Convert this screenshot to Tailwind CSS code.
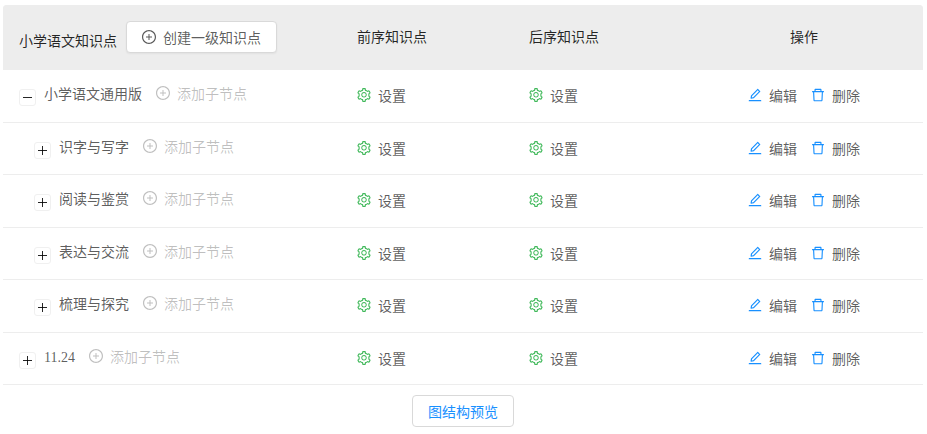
<!DOCTYPE html>
<html lang="zh-CN">
<head>
    <meta charset="UTF-8">
    <meta name="viewport" content="width=device-width, initial-scale=1.0">
    <title>小学语文知识点</title>
    <script src="https://cdn.jsdelivr.net/npm/@tailwindcss/browser@4"></script>
</head>
<body class="bg-white pt-[5px] pl-[3px] pr-1 text-sm leading-[22px] text-black/65 font-['Noto_Sans_CJK_SC',sans-serif]">

    <!-- Icon definitions -->
    <svg class="hidden" aria-hidden="true">
        <symbol id="icon-plus" viewBox="64 64 896 896">
            <path d="M696 480H544V328c0-4.400-3.600-8-8-8h-48c-4.400 0-8 3.600-8 8v152H328c-4.400 0-8 3.600-8 8v48c0 4.400 3.600 8 8 8h152v152c0 4.400 3.600 8 8 8h48c4.400 0 8-3.600 8-8V544h152c4.400 0 8-3.600 8-8v-48c0-4.400-3.600-8-8-8z"/>
            <path d="M512 64C264.600 64 64 264.600 64 512s200.600 448 448 448 448-200.600 448-448S759.400 64 512 64zm0 820c-205.400 0-372-166.600-372-372s166.600-372 372-372 372 166.600 372 372-166.600 372-372 372z"/>
        </symbol>
        <symbol id="icon-edit" viewBox="64 64 896 896">
            <path d="M257.700 752c2 0 4-.2 6-.5L431.900 722c2-.4 3.900-1.300 5.300-2.800l423.900-423.900a9.960 9.960 0 0 0 0-14.100L694.900 114.900c-1.900-1.900-4.400-2.900-7.100-2.900s-5.200 1-7.100 2.900L256.800 538.800c-1.500 1.500-2.400 3.300-2.800 5.300l-29.500 168.200a33.500 33.500 0 0 0 9.400 29.800c6.600 6.400 14.900 9.900 23.800 9.900zm67.400-174.400L687.800 215l73.300 73.300-362.700 362.600-88.900 15.700 15.600-89zM880 836H144c-17.700 0-32 14.300-32 32v36c0 4.400 3.600 8 8 8h784c4.400 0 8-3.600 8-8v-36c0-17.700-14.300-32-32-32z"/>
        </symbol>
        <symbol id="icon-delete" viewBox="64 64 896 896">
            <path d="M360 184h-8c4.400 0 8-3.600 8-8v8h304v-8c0 4.400 3.600 8 8 8h-8v72h72v-80c0-35.300-28.700-64-64-64H352c-35.300 0-64 28.700-64 64v80h72v-72zm504 72H160c-17.700 0-32 14.300-32 32v32c0 4.400 3.600 8 8 8h60.400l24.700 523c1.600 34.100 29.800 61 63.900 61h454c34.200 0 62.300-26.800 63.900-61l24.700-523H888c4.400 0 8-3.600 8-8v-32c0-17.700-14.300-32-32-32zM731.300 840H292.700l-24.200-512h487l-24.200 512z"/>
        </symbol>
        <symbol id="icon-setting" viewBox="64 64 896 896">
            <path d="M924.800 625.700l-65.500-56c3.100-19 4.700-38.400 4.700-57.800s-1.600-38.800-4.700-57.800l65.500-56a32.030 32.030 0 0 0 9.300-35.200l-.9-2.600a443.740 443.740 0 0 0-79.700-137.900l-1.800-2.100a32.120 32.120 0 0 0-35.100-9.500l-81.300 28.900c-30-24.600-63.500-44-99.700-57.600l-15.700-85a32.050 32.050 0 0 0-25.800-25.700l-2.700-.5c-52.100-9.400-106.900-9.400-159 0l-2.700.5a32.050 32.050 0 0 0-25.800 25.700l-15.800 85.400a351.860 351.860 0 0 0-99 57.400l-81.900-29.100a32 32 0 0 0-35.100 9.500l-1.800 2.100a446.020 446.020 0 0 0-79.700 137.900l-.9 2.600c-4.500 12.500-.8 26.500 9.300 35.200l66.300 56.600c-3.100 18.800-4.600 38-4.600 57.100 0 19.200 1.500 38.400 4.600 57.100L99 625.500a32.030 32.030 0 0 0-9.300 35.200l.9 2.600c18.100 50.400 44.900 96.900 79.700 137.900l1.800 2.100a32.120 32.120 0 0 0 35.100 9.500l81.900-29.100c29.800 24.500 63.100 43.900 99 57.400l15.800 85.400a32.050 32.050 0 0 0 25.800 25.700l2.700.5a449.400 449.400 0 0 0 159 0l2.700-.5a32.050 32.050 0 0 0 25.800-25.700l15.700-85a350 350 0 0 0 99.700-57.600l81.300 28.900a32 32 0 0 0 35.100-9.500l1.800-2.100c34.800-41.100 61.600-87.500 79.700-137.900l.9-2.600c4.500-12.300.8-26.300-9.300-35zM788.300 465.900c2.500 15.100 3.800 30.600 3.800 46.100s-1.300 31-3.800 46.100l-6.600 40.100 74.700 63.900a370.030 370.030 0 0 1-42.600 73.600L721 702.800l-31.400 25.800c-23.900 19.600-50.500 35-79.300 45.800l-38.100 14.300-17.900 97a377.500 377.500 0 0 1-85 0l-17.900-97.200-37.800-14.500c-28.500-10.800-55-26.200-78.700-45.700l-31.400-25.900-93.400 33.200c-17-22.900-31.200-47.600-42.600-73.600l75.500-64.500-6.500-40c-2.400-14.900-3.700-30.300-3.700-45.500 0-15.300 1.200-30.600 3.700-45.500l6.500-40-75.500-64.500c11.300-26.100 25.600-50.700 42.600-73.600l93.400 33.200 31.400-25.900c23.700-19.500 50.200-34.900 78.700-45.700l37.900-14.300 17.900-97.200c28.100-3.200 56.800-3.200 85 0l17.900 97 38.100 14.300c28.700 10.800 55.400 26.200 79.300 45.800l31.400 25.800 92.800-32.900c17 22.900 31.200 47.600 42.600 73.600L781.800 426l6.500 39.900z"/>
            <path d="M512 326c-97.200 0-176 78.800-176 176s78.800 176 176 176 176-78.800 176-176-78.800-176-176-176zm79.200 255.200A111.600 111.600 0 0 1 512 614c-29.900 0-58-11.700-79.200-32.800A111.600 111.600 0 0 1 400 502c0-29.900 11.700-58 32.800-79.200C454 401.600 482.100 390 512 390c29.900 0 58 11.600 79.200 32.800A111.600 111.600 0 0 1 624 502c0 29.900-11.700 58-32.800 79.200z"/>
        </symbol>
    </svg>

    <table class="w-full table-fixed border-separate border-spacing-0">
        <colgroup>
            <col>
            <col class="w-[172px]">
            <col class="w-[172px]">
            <col class="w-[238px]">
        </colgroup>
        <thead>
            <tr class="h-[65px] bg-[#ededed] text-left align-top text-black/85">
                <th class="rounded-tl bg-[#ededed] px-4 pt-4 font-normal">
                    <div class="flex items-start gap-[9px]">
                        <span class="pt-2">小学语文知识点</span>
                        <button type="button" class="flex h-8 items-center gap-[7px] rounded border border-[#d9d9d9] bg-white px-[15px] text-black/65 shadow-xs hover:text-[#1890ff]">
                            <svg class="size-3.5 fill-current"><use href="#icon-plus"/></svg>创建一级知识点
                        </button>
                    </div>
                </th>
                <th class="px-4 pt-5 font-normal">前序知识点</th>
                <th class="px-4 pt-5 font-normal">后序知识点</th>
                <th class="rounded-tr bg-[#ededed] px-4 pt-5 text-center font-normal">操作</th>
            </tr>
        </thead>
        <tbody id="rows">
            <!-- Rows will be dynamically added here -->
        </tbody>
    </table>

    <div class="flex justify-center pt-2.5">
        <button type="button" class="h-8 rounded border border-[#d9d9d9] bg-white px-[15px] text-[#1890ff]">图结构预览</button>
    </div>

    <script>
        const nodes = [
            { name: '小学语文通用版', level: 0, open: true },
            { name: '识字与写字', level: 1, open: false },
            { name: '阅读与鉴赏', level: 1, open: false },
            { name: '表达与交流', level: 1, open: false },
            { name: '梳理与探究', level: 1, open: false },
            { name: '11.24', level: 0, open: false }
        ];

        const settingCell = `
            <td class="border-b border-[#ededed] px-4 pt-3.5">
                <button type="button" class="flex items-center gap-[7px]">
                    <svg class="size-3.5 fill-[#41b95b]"><use href="#icon-setting"/></svg>设置
                </button>
            </td>`;

        document.getElementById('rows').innerHTML = nodes.map(node => `
            <tr class="align-top odd:h-[53px] even:h-[52px]">
                <td class="border-b border-[#ededed] px-4 pt-3">
                    <div class="flex items-start ${node.level ? 'pl-[15px]' : ''}">
                        <button type="button" aria-label="${node.open ? '收起' : '展开'}" class="mt-[7px] mr-2 flex size-[17px] items-center justify-center rounded-[3px] border border-[#f0f0f0] bg-white">
                            <svg class="size-[9px] stroke-black/85" viewBox="0 0 9 9"><path d="${node.open ? 'M0 4.5h9' : 'M0 4.5h9M4.5 0v9'}"/></svg>
                        </button>
                        <div class="mr-3.5"><span class="font-['Liberation_Serif','Noto_Sans_CJK_SC',serif]">${node.name}</span></div>
                        <button type="button" class="flex items-center gap-[7px] text-black/25">
                            <svg class="size-3.5 fill-current"><use href="#icon-plus"/></svg>添加子节点
                        </button>
                    </div>
                </td>
                ${settingCell}
                ${settingCell}
                <td class="border-b border-[#ededed] px-4 pt-3.5">
                    <div class="flex justify-center gap-3.5">
                        <button type="button" class="flex items-center gap-[7px]">
                            <svg class="size-3.5 fill-[#1890ff]"><use href="#icon-edit"/></svg>编辑
                        </button>
                        <button type="button" class="flex items-center gap-[7px]">
                            <svg class="size-3.5 fill-[#1890ff]"><use href="#icon-delete"/></svg>删除
                        </button>
                    </div>
                </td>
            </tr>`).join('');
    </script>
</body>
</html>
